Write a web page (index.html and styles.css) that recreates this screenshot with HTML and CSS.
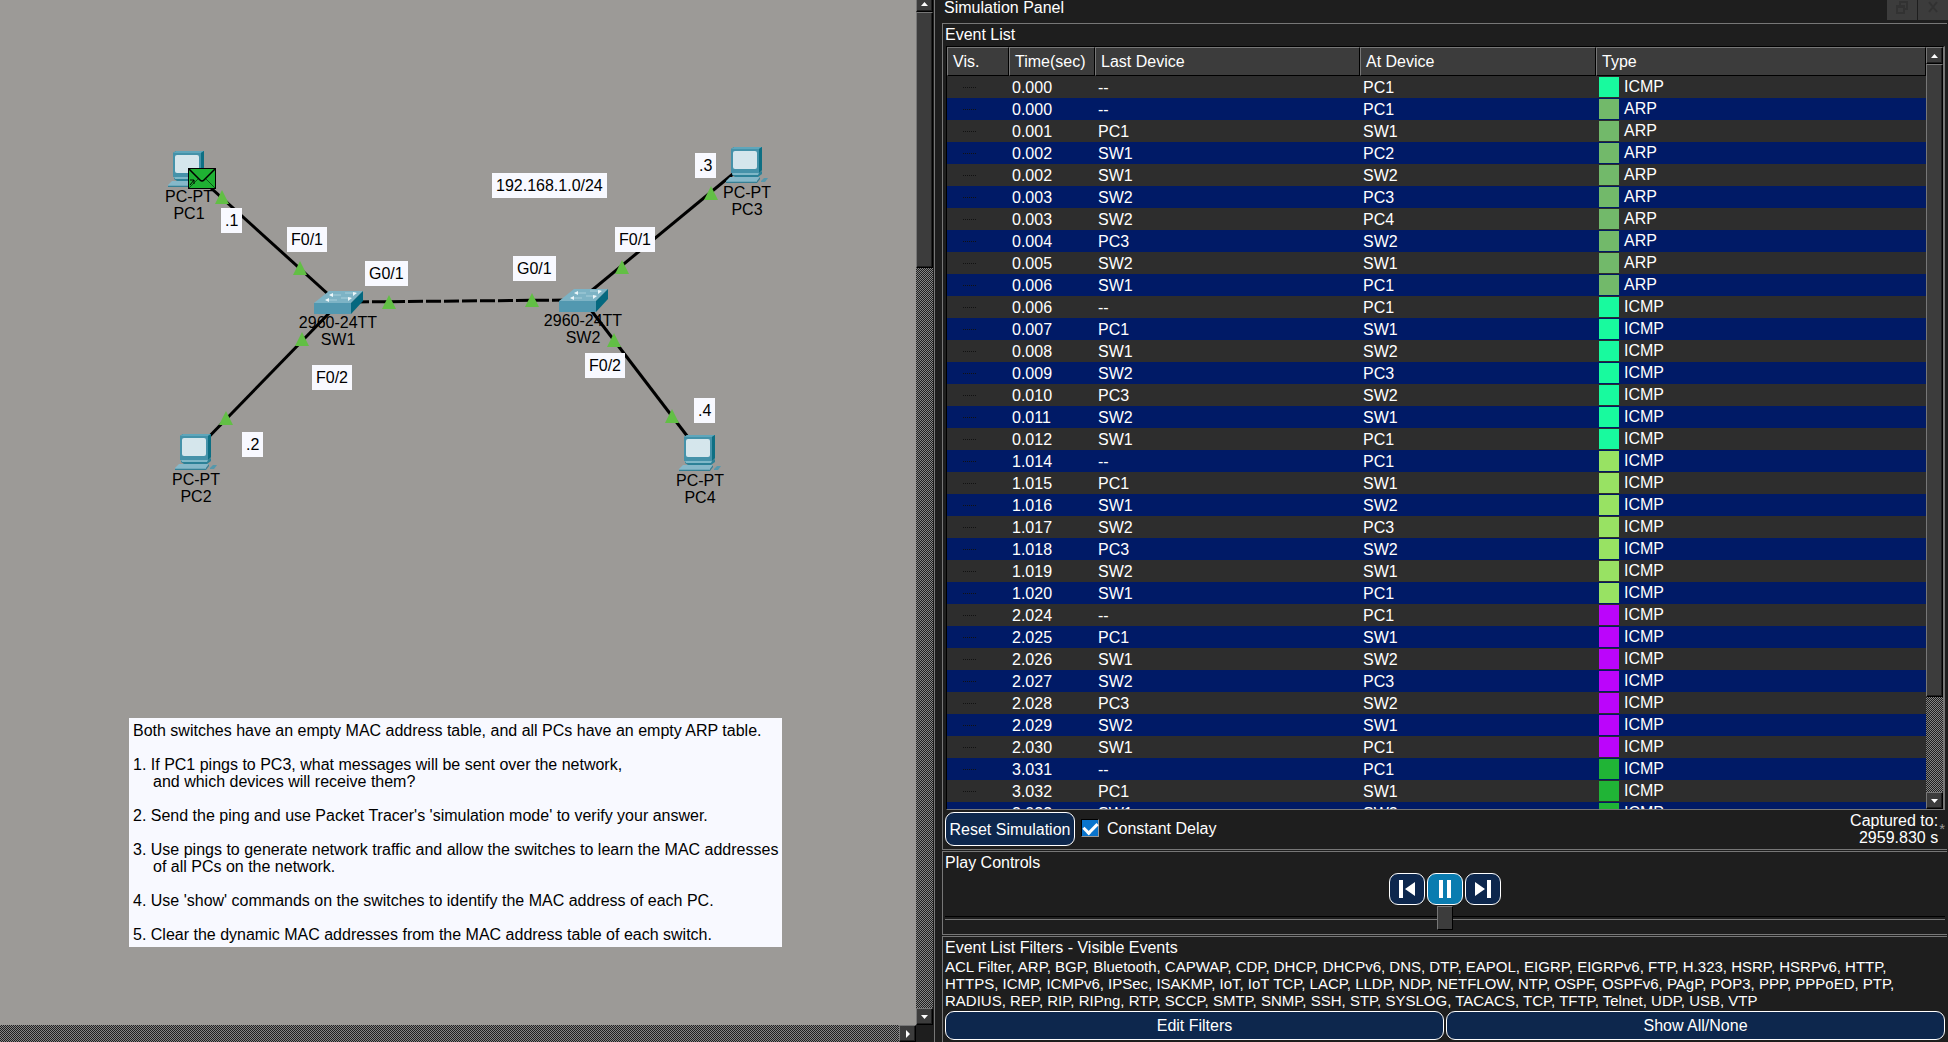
FILE: index.html
```
<!DOCTYPE html>
<html lang="en">
<head>
    <meta charset="UTF-8">
    <title>Simulation Panel</title>
    <link rel="stylesheet" href="styles.css">
</head>
<body>
    <svg class="defs" width="0" height="0">
        <symbol id="pc" viewBox="0 0 42 36">
            <path d="M5 2L8 0H36V23L33 26H5Z" fill="#1c7d92"/>
            <path d="M5 2L8 0H36L33 2Z" fill="#5fa6bb"/>
            <path d="M5 2H33V26H5Z" fill="#4592a9"/>
            <path d="M33 2L36 0V23L33 26Z" fill="#0e6f83"/>
            <rect x="7" y="4" width="24" height="18" rx="2" fill="#d5e6ec"/>
            <path d="M6 26H33L36 24V27L32 30H9L6 28Z" fill="#2c8197"/>
            <path d="M6 26H33L32 28H7Z" fill="#7fb8c8"/>
            <path d="M0 34L4 30H34L31 34Z" fill="#86b8c9"/>
            <path d="M0 34H31L34 30V32L31 36H0Z" fill="#367f94"/>
            <path d="M0 34H31V35H0Z" fill="#6fa9bb"/>
            <path d="M35 34L38 31H42L39 35H35Z" fill="#5597ab"/>
        </symbol>
        <symbol id="switch" viewBox="0 0 49 23">
            <path d="M0 12L15 0H49L37 12Z" fill="#7db3c5"/>
            <path d="M0 12H37V23H0Z" fill="#5298b0"/>
            <path d="M37 12L49 0V10L37 23Z" fill="#05687f"/>
            <path d="M16 4H27M31 2H42M12 9H23M27 7H37" stroke="#a9cfdb"/>
            <path d="M15 4l4-2v4zM43 2l-4-1v4zM11 9l4-2v4zM38 7l-4-1v4z" fill="#eef7fa"/>
        </symbol>
        <symbol id="up" viewBox="0 0 7 4"><path d="M0 4L3.500 0L7 4Z" fill="#fff"/></symbol>
        <symbol id="down" viewBox="0 0 7 4"><path d="M0 0H7L3.500 4Z" fill="#fff"/></symbol>
        <symbol id="right" viewBox="0 0 4 8"><path d="M0 0L4 4L0 8Z" fill="#fff"/></symbol>
    </svg>

    <div id="app">
        <main id="workspace">
            <div id="canvas">
                <svg class="links">
                    <g stroke="#000" stroke-width="3">
                        <path d="M190 169L339 304"/>
                        <path d="M200 446L339 303"/>
                        <path d="M745 164L585 296"/>
                        <path d="M584 301L694 445"/>
                        <path d="M354 302L570 300" stroke-dasharray="15 3"/>
                    </g>
                    <g fill="#62bf45">
                        <path d="M222 190l7 14h-14z"/>
                        <path d="M300 261l7 14h-14z"/>
                        <path d="M302 332l7 14h-14z"/>
                        <path d="M389 295l7 14h-14z"/>
                        <path d="M532 293l7 14h-14z"/>
                        <path d="M622 260l7 14h-14z"/>
                        <path d="M614 333l7 14h-14z"/>
                        <path d="M711 186l7 14h-14z"/>
                        <path d="M226 411l7 14h-14z"/>
                        <path d="M672 409l7 14h-14z"/>
                    </g>
                </svg>

                <div class="node pc" style="left:165px;top:151px"><svg><use href="#pc"/></svg><span>PC-PT</span><span>PC1</span></div>
                <div class="node pc" style="left:172px;top:434px"><svg><use href="#pc"/></svg><span>PC-PT</span><span>PC2</span></div>
                <div class="node pc" style="left:723px;top:147px"><svg><use href="#pc"/></svg><span>PC-PT</span><span>PC3</span></div>
                <div class="node pc" style="left:676px;top:435px"><svg><use href="#pc"/></svg><span>PC-PT</span><span>PC4</span></div>
                <div class="node switch" style="left:298px;top:291px"><svg><use href="#switch"/></svg><span>2960-24TT</span><span>SW1</span></div>
                <div class="node switch" style="left:543px;top:289px"><svg><use href="#switch"/></svg><span>2960-24TT</span><span>SW2</span></div>

                <svg class="envelope" style="left:188px;top:168px" viewBox="0 0 28 21">
                    <rect x="0.500" y="0.500" width="27" height="20" fill="#1fb133" stroke="#000"/>
                    <path d="M1 1L12 12Q14 14 16 12L27 1" fill="none" stroke="#000" stroke-width="1.500"/>
                    <path d="M1 20L10 11M18 11L27 20" stroke="#0b5417"/>
                    <path d="M2 12H6V16M6 12L2 17" fill="none" stroke="#000"/>
                </svg>

                <div class="note" style="left:492px;top:173px">192.168.1.0/24</div>
                <div class="note" style="left:221px;top:208px">.1</div>
                <div class="note" style="left:242px;top:432px">.2</div>
                <div class="note" style="left:695px;top:153px">.3</div>
                <div class="note" style="left:694px;top:398px">.4</div>
                <div class="note" style="left:287px;top:227px">F0/1</div>
                <div class="note" style="left:312px;top:365px">F0/2</div>
                <div class="note" style="left:365px;top:261px">G0/1</div>
                <div class="note" style="left:513px;top:256px">G0/1</div>
                <div class="note" style="left:615px;top:227px">F0/1</div>
                <div class="note" style="left:585px;top:353px">F0/2</div>
                <div class="note" style="left:129px;top:718px">Both switches have an empty MAC address table, and all PCs have an empty ARP table.

1. If PC1 pings to PC3, what messages will be sent over the network,
<span class="indent">and which devices will receive them?</span>

2. Send the ping and use Packet Tracer's 'simulation mode' to verify your answer.

3. Use pings to generate network traffic and allow the switches to learn the MAC addresses
<span class="indent">of all PCs on the network.</span>

4. Use 'show' commands on the switches to identify the MAC address of each PC.

5. Clear the dynamic MAC addresses from the MAC address table of each switch.</div>
            </div>
            <div class="vbar">
                <button type="button" class="arrow cut" aria-label="Scroll up"><svg width="7" height="4"><use href="#up"/></svg></button>
                <div class="track"><div class="thumb short"></div></div>
                <button type="button" class="arrow" aria-label="Scroll down"><svg width="7" height="4"><use href="#down"/></svg></button>
            </div>
            <div class="hbar">
                <div class="track"></div>
                <button type="button" class="arrow" aria-label="Scroll right"><svg width="4" height="8"><use href="#right"/></svg></button>
            </div>
        </main>

        <aside id="panel">
            <header class="titlebar">
                <span>Simulation Panel</span>
                <div class="winbtns">
                    <button type="button" aria-label="Float"><svg width="12" height="13" viewBox="0 0 12 13"><path d="M4 4V1H11V8H8M1 5H8V12H1ZM1 6H8" fill="none" stroke="#323232" stroke-width="2"/></svg></button>
                    <button type="button" aria-label="Close"><svg width="10" height="12" viewBox="0 0 10 12"><path d="M1 1L9 11M9 1L1 11" stroke="#323232" stroke-width="2"/></svg></button>
                </div>
            </header>

            <section class="box events">
                <h2>Event List</h2>
                <div class="list">
                    <div class="rows">
                        <table>
                            <colgroup><col class="vis"><col class="time"><col class="last"><col class="at"><col></colgroup>
                            <thead>
                                <tr><th>Vis.</th><th>Time(sec)</th><th>Last Device</th><th>At Device</th><th>Type</th></tr>
                            </thead>
                            <tbody>
                                <tr><td></td><td>0.000</td><td>--</td><td>PC1</td><td class="mint">ICMP</td></tr>
                                <tr><td></td><td>0.000</td><td>--</td><td>PC1</td><td class="arp">ARP</td></tr>
                                <tr><td></td><td>0.001</td><td>PC1</td><td>SW1</td><td class="arp">ARP</td></tr>
                                <tr><td></td><td>0.002</td><td>SW1</td><td>PC2</td><td class="arp">ARP</td></tr>
                                <tr><td></td><td>0.002</td><td>SW1</td><td>SW2</td><td class="arp">ARP</td></tr>
                                <tr><td></td><td>0.003</td><td>SW2</td><td>PC3</td><td class="arp">ARP</td></tr>
                                <tr><td></td><td>0.003</td><td>SW2</td><td>PC4</td><td class="arp">ARP</td></tr>
                                <tr><td></td><td>0.004</td><td>PC3</td><td>SW2</td><td class="arp">ARP</td></tr>
                                <tr><td></td><td>0.005</td><td>SW2</td><td>SW1</td><td class="arp">ARP</td></tr>
                                <tr><td></td><td>0.006</td><td>SW1</td><td>PC1</td><td class="arp">ARP</td></tr>
                                <tr><td></td><td>0.006</td><td>--</td><td>PC1</td><td class="mint">ICMP</td></tr>
                                <tr><td></td><td>0.007</td><td>PC1</td><td>SW1</td><td class="mint">ICMP</td></tr>
                                <tr><td></td><td>0.008</td><td>SW1</td><td>SW2</td><td class="mint">ICMP</td></tr>
                                <tr><td></td><td>0.009</td><td>SW2</td><td>PC3</td><td class="mint">ICMP</td></tr>
                                <tr><td></td><td>0.010</td><td>PC3</td><td>SW2</td><td class="mint">ICMP</td></tr>
                                <tr><td></td><td>0.011</td><td>SW2</td><td>SW1</td><td class="mint">ICMP</td></tr>
                                <tr><td></td><td>0.012</td><td>SW1</td><td>PC1</td><td class="mint">ICMP</td></tr>
                                <tr><td></td><td>1.014</td><td>--</td><td>PC1</td><td class="lime">ICMP</td></tr>
                                <tr><td></td><td>1.015</td><td>PC1</td><td>SW1</td><td class="lime">ICMP</td></tr>
                                <tr><td></td><td>1.016</td><td>SW1</td><td>SW2</td><td class="lime">ICMP</td></tr>
                                <tr><td></td><td>1.017</td><td>SW2</td><td>PC3</td><td class="lime">ICMP</td></tr>
                                <tr><td></td><td>1.018</td><td>PC3</td><td>SW2</td><td class="lime">ICMP</td></tr>
                                <tr><td></td><td>1.019</td><td>SW2</td><td>SW1</td><td class="lime">ICMP</td></tr>
                                <tr><td></td><td>1.020</td><td>SW1</td><td>PC1</td><td class="lime">ICMP</td></tr>
                                <tr><td></td><td>2.024</td><td>--</td><td>PC1</td><td class="purple">ICMP</td></tr>
                                <tr><td></td><td>2.025</td><td>PC1</td><td>SW1</td><td class="purple">ICMP</td></tr>
                                <tr><td></td><td>2.026</td><td>SW1</td><td>SW2</td><td class="purple">ICMP</td></tr>
                                <tr><td></td><td>2.027</td><td>SW2</td><td>PC3</td><td class="purple">ICMP</td></tr>
                                <tr><td></td><td>2.028</td><td>PC3</td><td>SW2</td><td class="purple">ICMP</td></tr>
                                <tr><td></td><td>2.029</td><td>SW2</td><td>SW1</td><td class="purple">ICMP</td></tr>
                                <tr><td></td><td>2.030</td><td>SW1</td><td>PC1</td><td class="purple">ICMP</td></tr>
                                <tr><td></td><td>3.031</td><td>--</td><td>PC1</td><td class="green">ICMP</td></tr>
                                <tr><td></td><td>3.032</td><td>PC1</td><td>SW1</td><td class="green">ICMP</td></tr>
                                <tr><td></td><td>3.033</td><td>SW1</td><td>SW2</td><td class="green">ICMP</td></tr>
                            </tbody>
                        </table>
                    </div>
                    <div class="vbar">
                        <button type="button" class="arrow" aria-label="Scroll up"><svg width="7" height="4"><use href="#up"/></svg></button>
                        <div class="track"><div class="thumb long"></div></div>
                        <button type="button" class="arrow" aria-label="Scroll down"><svg width="7" height="4"><use href="#down"/></svg></button>
                    </div>
                </div>
                <div class="options">
                    <button type="button" class="btn reset">Reset Simulation</button>
                    <label><input type="checkbox" checked>Constant Delay</label>
                    <p class="captured">Captured to:<br>2959.830 s</p>
                    <span class="star">*</span>
                </div>
            </section>

            <section class="box play">
                <h2>Play Controls</h2>
                <div class="controls">
                    <button type="button" class="btn" aria-label="Back"><svg width="16" height="18" viewBox="0 0 16 18"><path d="M0 0H4V18H0ZM16 2V16L6 9Z" fill="#fff"/></svg></button>
                    <button type="button" class="btn active" aria-label="Pause"><svg width="12" height="18" viewBox="0 0 12 18"><path d="M0 0H4V18H0ZM8 0H12V18H8Z" fill="#fff"/></svg></button>
                    <button type="button" class="btn" aria-label="Forward"><svg width="16" height="18" viewBox="0 0 16 18"><path d="M12 0H16V18H12ZM0 2V16L10 9Z" fill="#fff"/></svg></button>
                </div>
                <input type="range" min="0" max="100" value="50" aria-label="Play speed">
            </section>

            <section class="box filters">
                <h2>Event List Filters - Visible Events</h2>
                <p>ACL Filter, ARP, BGP, Bluetooth, CAPWAP, CDP, DHCP, DHCPv6, DNS, DTP, EAPOL, EIGRP, EIGRPv6, FTP, H.323, HSRP, HSRPv6, HTTP,<br>
                HTTPS, ICMP, ICMPv6, IPSec, ISAKMP, IoT, IoT TCP, LACP, LLDP, NDP, NETFLOW, NTP, OSPF, OSPFv6, PAgP, POP3, PPP, PPPoED, PTP,<br>
                RADIUS, REP, RIP, RIPng, RTP, SCCP, SMTP, SNMP, SSH, STP, SYSLOG, TACACS, TCP, TFTP, Telnet, UDP, USB, VTP</p>
                <div class="btns">
                    <button type="button" class="btn">Edit Filters</button>
                    <button type="button" class="btn">Show All/None</button>
                </div>
            </section>
        </aside>
    </div>
</body>
</html>
```
FILE: styles.css
```
*{
    box-sizing:border-box;
}
body, h2, p{
    margin:0;
    padding:0;
}
body, button{
    font-family:"Liberation Sans", Arial, sans-serif;
    font-size:16px;
    line-height:17px;
}
body{
    background:#1e1e1e;
    color:#fff;
}
button{
    padding:0;
    color:#fff;
}
.defs{
    position:absolute;
}
#app{
    display:grid;
    grid-template-columns:934fr 1014fr;
    height:100vh;
    overflow:hidden;
}

/* workspace */
#workspace{
    display:grid;
    grid-template-columns:1fr 17px;
    grid-template-rows:1fr 17px;
    min-width:0;
    min-height:0;
    padding-right:1px;
}
#canvas{
    position:relative;
    overflow:hidden;
    background:#9c9a97;
    color:#000;
}
.links{
    position:absolute;
    width:100%;
    height:100%;
}
.node{
    position:absolute;
    display:flex;
    flex-direction:column;
    align-items:center;
}
.node.pc{
    width:48px;
}
.node.pc svg{
    width:42px;
    height:36px;
    margin-bottom:1px;
}
.node.switch{
    width:80px;
}
.node.switch svg{
    width:49px;
    height:23px;
}
.envelope{
    position:absolute;
    width:28px;
    height:21px;
}
.note{
    position:absolute;
    padding:4px;
    background:#f8f9ff;
    white-space:pre;
}
.note .indent{
    padding-left:20px;
}

/* scrollbars */
.vbar, .hbar{
    display:flex;
    min-width:0;
    min-height:0;
}
.vbar{
    flex-direction:column;
    width:17px;
}
.track{
    flex:1;
    min-height:0;
    background:repeating-conic-gradient(#202020 0 25%, #858585 0 50%) 0 0/2px 2px;
}
.arrow, .thumb{
    background:#3c3c3c;
    border:1px solid;
    border-color:#777 #000 #000 #777;
    box-shadow:inset -1px -1px #1e1e1e;
}
.arrow{
    display:flex;
    flex:none;
    align-items:center;
    justify-content:center;
    width:17px;
    height:17px;
}
.arrow.cut{
    height:12px;
    padding-bottom:3px;
    border-top:0;
}
.thumb.short{
    height:256px;
}
.thumb.long{
    height:87%;
}

/* simulation panel */
#panel{
    display:flex;
    flex-direction:column;
    min-width:0;
    min-height:0;
    padding:0 1px 0 7px;
    border-left:1px solid #777;
}
.titlebar{
    display:flex;
    justify-content:space-between;
    height:23px;
    margin-right:-1px;
    padding-left:2px;
    line-height:16px;
}
.winbtns{
    display:flex;
    gap:1px;
}
.winbtns button{
    display:flex;
    align-items:center;
    justify-content:center;
    width:30px;
    height:20px;
    padding-bottom:6px;
    border:0;
    background:#3c3c3c;
}
.box{
    padding-left:2px;
    padding-right:2px;
    border:1px solid #777;
    border-right:0;
}
.box h2{
    font-size:16px;
    font-weight:normal;
    line-height:21px;
}
.box.events h2{
    line-height:22px;
}
.events{
    display:flex;
    flex:1;
    flex-direction:column;
    min-height:0;
    margin-bottom:1px;
}
.list{
    display:flex;
    flex:1;
    min-height:0;
    margin-left:1px;
    border:1px solid #000;
    border-right:2px solid #777;
    border-bottom-color:#777;
}
.rows{
    flex:1;
    min-width:0;
    overflow:hidden;
    background:#2d2d2d;
}
table{
    width:100%;
    table-layout:fixed;
    border-spacing:0;
}
.vis{
    width:62px;
}
.time{
    width:86px;
}
.last{
    width:265px;
}
.at{
    width:236px;
}
th{
    height:29px;
    padding:0 5px;
    background:#3c3c3c;
    border:1px solid;
    border-color:#777 #000 #000 #777;
    font-weight:normal;
    text-align:left;
}
td{
    height:22px;
    padding:0 3px;
}
tbody tr:nth-child(even){
    background:#001a66;
}
td:first-child::before{
    content:"";
    display:block;
    width:13px;
    margin-left:13px;
    border-top:1px dotted #111;
}
td:last-child{
    line-height:22px;
}
td:last-child::before{
    content:"";
    float:left;
    width:20px;
    height:20px;
    margin:1px 5px 1px 0;
}
.mint::before{
    background:#18fa9e;
}
.arp::before{
    background:#72b96a;
}
.lime::before{
    background:#98e263;
}
.purple::before{
    background:#bb05fb;
}
.green::before{
    background:#20b436;
}
.options{
    display:flex;
    align-items:flex-start;
    height:39px;
    padding-top:2px;
}
.btn{
    background:#0d274d;
    border:1px solid #fff;
    border-radius:9px;
}
.reset{
    width:130px;
    height:34px;
}
.options label{
    display:flex;
    align-items:center;
    gap:8px;
    height:32px;
    margin-left:6px;
}
.options input{
    display:flex;
    justify-content:center;
    width:18px;
    height:18px;
    margin:0;
    appearance:none;
    background:#0a74cc;
    border:1px solid;
    border-color:#000 #999 #999 #000;
}
.options input:checked::after{
    content:"";
    width:6px;
    height:11px;
    border:solid #fff;
    border-width:0 3px 3px 0;
    transform:rotate(45deg);
}
.captured{
    margin-left:auto;
    text-align:right;
}
.star{
    margin:8px 0 0 1px;
    font-size:15px;
    color:#999;
}
.play{
    height:84px;
    margin-bottom:1px;
}
.controls{
    display:flex;
    justify-content:center;
    gap:2px;
}
.controls .btn{
    display:flex;
    align-items:center;
    justify-content:center;
    width:36px;
    height:32px;
}
.controls .active{
    background:#0a7cb0;
}
input[type=range]{
    display:block;
    width:100%;
    height:24px;
    margin:1px 0 0;
    appearance:none;
    background:none;
}
input[type=range]::-webkit-slider-runnable-track{
    height:4px;
    background:#1e1e1e;
    border-top:1px solid #000;
    border-bottom:1px solid #777;
}
input[type=range]::-webkit-slider-thumb{
    width:16px;
    height:24px;
    margin-top:-11px;
    appearance:none;
    background:#3c3c3c;
    border:1px solid;
    border-color:#777 #000 #000 #777;
}
.filters{
    height:106px;
    border-bottom:0;
}
.filters p{
    font-size:15px;
    white-space:nowrap;
}
.btns{
    display:flex;
    gap:2px;
    margin-top:2px;
}
.btns .btn{
    flex:1;
    height:29px;
}
```
